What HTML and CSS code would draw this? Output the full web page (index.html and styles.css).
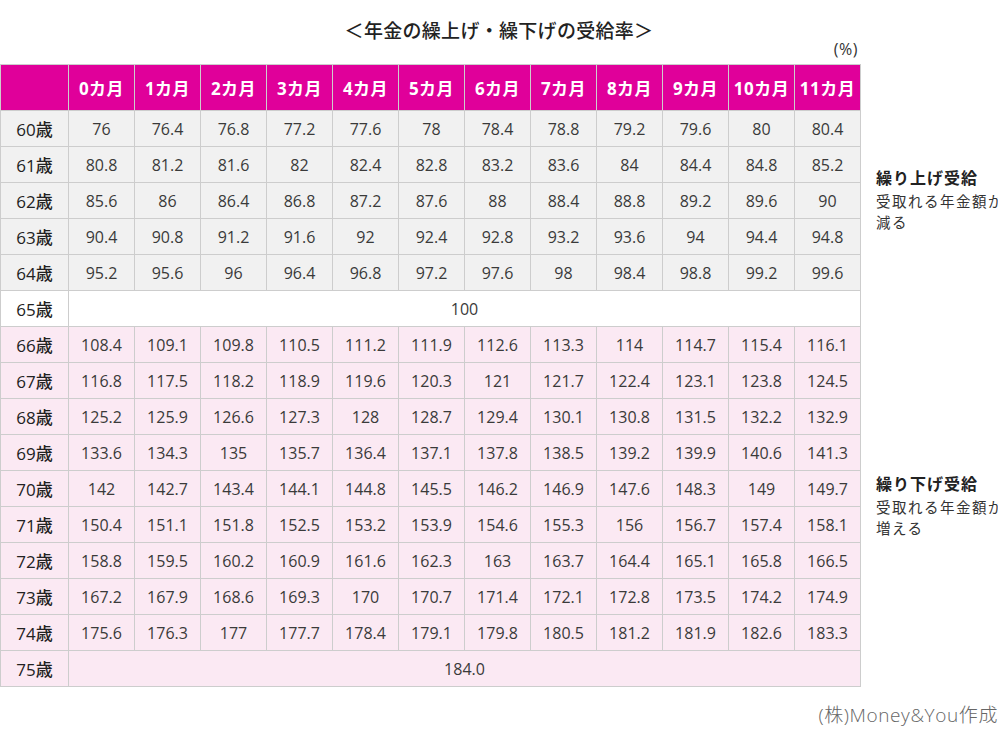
FILE: index.html
```html
<!DOCTYPE html>
<html lang="ja">
<head>
<meta charset="utf-8">
<link rel="stylesheet" href="styles.css">
</head>
<body>
<div class="page">
  <h1 class="title">＜年金の繰上げ・繰下げの受給率＞</h1>
  <div class="unit-row"><span class="unit">(%)</span></div>
  <div class="main">
    <table class="rates">
      <colgroup>
        <col class="c-age"><col><col><col><col><col><col><col><col><col><col><col><col>
      </colgroup>
      <thead>
        <tr>
          <th></th><th>0カ月</th><th>1カ月</th><th>2カ月</th><th>3カ月</th><th>4カ月</th><th>5カ月</th><th>6カ月</th><th>7カ月</th><th>8カ月</th><th>9カ月</th><th>10カ月</th><th>11カ月</th>
        </tr>
      </thead>
      <tbody>
        <tr class="early"><th>60歳</th><td>76</td><td>76.4</td><td>76.8</td><td>77.2</td><td>77.6</td><td>78</td><td>78.4</td><td>78.8</td><td>79.2</td><td>79.6</td><td>80</td><td>80.4</td></tr>
        <tr class="early"><th>61歳</th><td>80.8</td><td>81.2</td><td>81.6</td><td>82</td><td>82.4</td><td>82.8</td><td>83.2</td><td>83.6</td><td>84</td><td>84.4</td><td>84.8</td><td>85.2</td></tr>
        <tr class="early"><th>62歳</th><td>85.6</td><td>86</td><td>86.4</td><td>86.8</td><td>87.2</td><td>87.6</td><td>88</td><td>88.4</td><td>88.8</td><td>89.2</td><td>89.6</td><td>90</td></tr>
        <tr class="early"><th>63歳</th><td>90.4</td><td>90.8</td><td>91.2</td><td>91.6</td><td>92</td><td>92.4</td><td>92.8</td><td>93.2</td><td>93.6</td><td>94</td><td>94.4</td><td>94.8</td></tr>
        <tr class="early"><th>64歳</th><td>95.2</td><td>95.6</td><td>96</td><td>96.4</td><td>96.8</td><td>97.2</td><td>97.6</td><td>98</td><td>98.4</td><td>98.8</td><td>99.2</td><td>99.6</td></tr>
        <tr class="normal"><th>65歳</th><td colspan="12">100</td></tr>
        <tr class="late"><th>66歳</th><td>108.4</td><td>109.1</td><td>109.8</td><td>110.5</td><td>111.2</td><td>111.9</td><td>112.6</td><td>113.3</td><td>114</td><td>114.7</td><td>115.4</td><td>116.1</td></tr>
        <tr class="late"><th>67歳</th><td>116.8</td><td>117.5</td><td>118.2</td><td>118.9</td><td>119.6</td><td>120.3</td><td>121</td><td>121.7</td><td>122.4</td><td>123.1</td><td>123.8</td><td>124.5</td></tr>
        <tr class="late"><th>68歳</th><td>125.2</td><td>125.9</td><td>126.6</td><td>127.3</td><td>128</td><td>128.7</td><td>129.4</td><td>130.1</td><td>130.8</td><td>131.5</td><td>132.2</td><td>132.9</td></tr>
        <tr class="late"><th>69歳</th><td>133.6</td><td>134.3</td><td>135</td><td>135.7</td><td>136.4</td><td>137.1</td><td>137.8</td><td>138.5</td><td>139.2</td><td>139.9</td><td>140.6</td><td>141.3</td></tr>
        <tr class="late"><th>70歳</th><td>142</td><td>142.7</td><td>143.4</td><td>144.1</td><td>144.8</td><td>145.5</td><td>146.2</td><td>146.9</td><td>147.6</td><td>148.3</td><td>149</td><td>149.7</td></tr>
        <tr class="late"><th>71歳</th><td>150.4</td><td>151.1</td><td>151.8</td><td>152.5</td><td>153.2</td><td>153.9</td><td>154.6</td><td>155.3</td><td>156</td><td>156.7</td><td>157.4</td><td>158.1</td></tr>
        <tr class="late"><th>72歳</th><td>158.8</td><td>159.5</td><td>160.2</td><td>160.9</td><td>161.6</td><td>162.3</td><td>163</td><td>163.7</td><td>164.4</td><td>165.1</td><td>165.8</td><td>166.5</td></tr>
        <tr class="late"><th>73歳</th><td>167.2</td><td>167.9</td><td>168.6</td><td>169.3</td><td>170</td><td>170.7</td><td>171.4</td><td>172.1</td><td>172.8</td><td>173.5</td><td>174.2</td><td>174.9</td></tr>
        <tr class="late"><th>74歳</th><td>175.6</td><td>176.3</td><td>177</td><td>177.7</td><td>178.4</td><td>179.1</td><td>179.8</td><td>180.5</td><td>181.2</td><td>181.9</td><td>182.6</td><td>183.3</td></tr>
        <tr class="late"><th>75歳</th><td colspan="12">184.0</td></tr>
      </tbody>
    </table>
    <aside class="side">
      <div class="side-head"></div>
      <div class="side-block early-block">
        <p class="side-title">繰り上げ受給</p>
        <p class="side-text">受取れる年金額が<br>減る</p>
      </div>
      <div class="side-gap"></div>
      <div class="side-block late-block">
        <p class="side-title">繰り下げ受給</p>
        <p class="side-text">受取れる年金額が<br>増える</p>
      </div>
    </aside>
  </div>
  <p class="credit">(株)Money&amp;You作成</p>
</div>
</body>
</html>
```

FILE: styles.css
```css
html, body {
  margin: 0;
  padding: 0;
  background: #fff;
  overflow: hidden;
}
body {
  font-family: "Open Sans", "Noto Sans CJK JP", sans-serif;
  color: #333;
}
.page {
  width: 998px;
  height: 736px;
  overflow: hidden;
}
.title {
  margin: 0;
  padding-top: 18px;
  height: 24px;
  line-height: 24px;
  font-family: "Noto Sans CJK JP", sans-serif;
  font-size: 19px;
  font-weight: 500;
  text-align: center;
  color: #222;
  letter-spacing: 0.3px;
}
.unit-row {
  width: 860px;
  height: 22px;
  display: flex;
  justify-content: flex-end;
  align-items: flex-start;
}
.unit {
  font-size: 16px;
  color: #333;
  line-height: 14px;
  padding-right: 2px;
  letter-spacing: 0.5px;
}
.main {
  display: flex;
  align-items: flex-start;
}
.rates {
  border-collapse: collapse;
  table-layout: fixed;
  width: 860px;
  flex: none;
}
.rates col { width: 66px; }
.rates col.c-age { width: 68px; }
.rates th, .rates td {
  border: 1px solid #cdcdcd;
  padding: 0;
  text-align: center;
  white-space: nowrap;
}
.rates thead th {
  background: #e0009a;
  color: #fff;
  height: 45px;
  font-size: 17px;
  font-weight: 700;
  letter-spacing: 0.5px;
}
.rates tbody th,
.rates tbody td {
  height: 35px;
}
.rates tbody th {
  font-size: 17px;
  font-weight: 500;
  color: #222;
}
.rates tbody td {
  font-size: 16px;
  font-weight: 400;
  color: #3a3a3a;
}
.rates tr.early th, .rates tr.early td { background: #f1f1f1; }
.rates tr.normal th, .rates tr.normal td { background: #fff; }
.rates tr.late th, .rates tr.late td { background: #fbe9f3; }

.side {
  flex: 1;
  display: flex;
  flex-direction: column;
  padding-left: 15px;
  white-space: nowrap;
  overflow: hidden;
}
.side-head { height: 46px; }
.side-block {
  display: flex;
  flex-direction: column;
  justify-content: center;
}
.early-block { height: 180px; }
.side-gap { height: 36px; }
.late-block { height: 360px; }
.side-title {
  margin: 0;
  font-size: 16px;
  font-weight: 700;
  line-height: 22px;
  color: #222;
  letter-spacing: 1px;
}
.side-text {
  margin: 2px 0 0;
  font-size: 14.5px;
  line-height: 21px;
  color: #333;
  letter-spacing: 1.5px;
}
.credit {
  margin: 17px 0 0;
  text-align: right;
  font-size: 19px;
  font-weight: 300;
  line-height: 22px;
  color: #666;
  letter-spacing: 0.6px;
}
```
